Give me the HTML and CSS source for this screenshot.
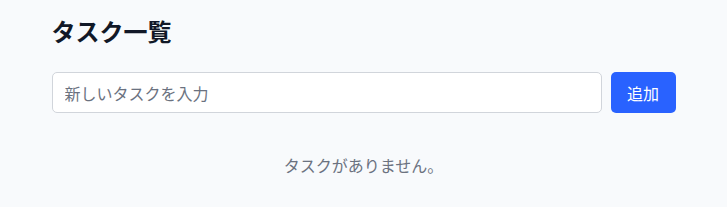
FILE: index.html
```html
<!DOCTYPE html>
<html lang="ja">
<head>
<meta charset="utf-8">
<link rel="stylesheet" href="styles.css">
</head>
<body>
<main class="app">
  <h1 class="title">タスク一覧</h1>
  <form class="add-form">
    <input class="task-input" type="text" placeholder="新しいタスクを入力">
    <button class="add-btn" type="button">追加</button>
  </form>
  <p class="empty">タスクがありません。</p>
</main>
</body>
</html>
```
FILE: styles.css
```css
html, body {
  margin: 0;
  padding: 0;
  background: #f8fafc;
}
body {
  font-family: "Noto Sans CJK JP", "Noto Sans", sans-serif;
  color: #111827;
}
.app {
  max-width: 624px;
  margin: 0 auto;
  padding-top: 15px;
}
.title {
  margin: 0;
  font-size: 24px;
  line-height: 32px;
  font-weight: 700;
}
.add-form {
  display: flex;
  gap: 9px;
  margin-top: 25px;
}
.task-input {
  flex: 1;
  height: 41px;
  box-sizing: border-box;
  border: 1px solid #d1d5db;
  border-radius: 5px;
  background: #ffffff;
  padding: 0 12px;
  font-family: inherit;
  font-size: 16px;
  color: #111827;
  outline: none;
}
.task-input::placeholder {
  color: #6b7280;
}
.add-btn {
  height: 41px;
  width: 65px;
  border: none;
  border-radius: 5px;
  background: #2962ff;
  color: #ffffff;
  font-family: inherit;
  font-size: 16px;
  padding: 0;
}
.empty {
  margin: 40px 0 0;
  text-align: center;
  font-size: 16px;
  line-height: 24px;
  color: #6b7280;
}
```
